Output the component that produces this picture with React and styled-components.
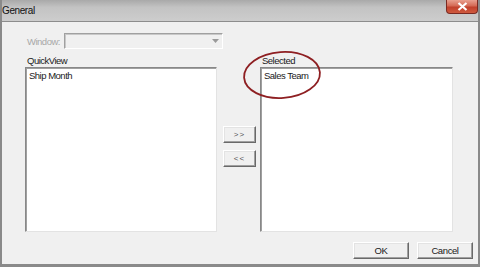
import styled, { createGlobalStyle } from "styled-components";

const GlobalStyle = createGlobalStyle`
  html, body {
    margin: 0;
    padding: 0;
    background: #ffffff;
  }
  body {
    font-family: "Liberation Sans", Arial, sans-serif;
    font-size: 9.5px;
    letter-spacing: -0.5px;
  }
`;

const Frame = styled.div`
  position: relative;
  width: 480px;
  height: 267px;
  box-sizing: border-box;
  display: flex;
  flex-direction: column;
  background: #f0f0f0;
  border-left: 2px solid #8a8a8a;
  border-right: 2px solid #8a8a8a;
  border-bottom: 3px solid #8a8a8a;
  overflow: hidden;
`;

const TitleBar = styled.div`
  height: 21px;
  flex: none;
  display: flex;
  align-items: flex-start;
  justify-content: space-between;
  margin: 0 -2px;
  background: linear-gradient(180deg, #a9a9a9 0%, #c3c3c3 35%, #cdcdcd 100%);
  border-bottom: 1px solid #8d8d8d;
`;

const Title = styled.span`
  padding: 5px 0 0 2px;
  font-size: 10px;
  letter-spacing: -0.4px;
  color: #111;
`;

const CloseButton = styled.div`
  width: 32px;
  height: 14px;
  margin-right: 2px;
  display: flex;
  align-items: center;
  justify-content: center;
  border: 1px solid #7a2a22;
  border-top: none;
  border-radius: 0 0 4px 4px;
  background: linear-gradient(180deg, #e8a08f 0%, #d46a55 45%, #c1412c 55%, #cf5a3f 100%);
  box-sizing: border-box;
`;

const Body = styled.div`
  flex: 1;
  display: flex;
  flex-direction: column;
  padding: 11px 0 0 23px;
`;

const WindowRow = styled.div`
  display: flex;
  align-items: center;
  height: 16px;
`;

const DimLabel = styled.span`
  width: 39px;
  box-sizing: border-box;
  padding-left: 2px;
  color: #a8a8a8;
`;

const Combo = styled.div`
  width: 159px;
  height: 16px;
  box-sizing: border-box;
  display: flex;
  justify-content: flex-end;
  align-items: center;
  border: 1px solid;
  border-color: #a0a0a0 #ffffff #ffffff #a0a0a0;
  box-shadow: inset 1px 1px 0 #c8c8c8;
  background: #f0f0f0;
  padding-right: 3px;
`;

const Lists = styled.div`
  display: grid;
  grid-template-columns: 192px 43px 193px;
  grid-template-rows: 12px 165px;
  margin-top: 6px;
`;

const Label = styled.span`
  color: #1a1a1a;
  padding-left: 2px;
  line-height: 12px;
`;

const ListBox = styled.div`
  box-sizing: border-box;
  background: #ffffff;
  border: 1px solid;
  border-color: #888888 #e3e3e3 #e3e3e3 #888888;
  box-shadow: inset 1px 1px 0 #a0a0a0;
  padding: 2px 3px;
`;

const Item = styled.div`
  color: #1a1a1a;
  line-height: 12px;
`;

const MoveColumn = styled.div`
  display: flex;
  flex-direction: column;
  align-items: flex-start;
  gap: 7px;
  padding: 59px 0 0 6px;
`;

const Button = styled.button`
  width: ${({ wide }) => (wide ? "56px" : "33px")};
  height: 17px;
  padding: 0;
  box-sizing: border-box;
  background: #f0f0f0;
  border: 1px solid;
  border-color: #ffffff #696969 #696969 #ffffff;
  box-shadow: inset -1px -1px 0 #a0a0a0, inset 1px 1px 0 #e3e3e3;
  font-family: "Liberation Sans", Arial, sans-serif;
  font-size: ${({ wide }) => (wide ? "9.5px" : "8px")};
  color: ${({ wide }) => (wide ? "#1a1a1a" : "#555")};
  letter-spacing: ${({ wide }) => (wide ? "-0.4px" : "1px")};
`;

const Footer = styled.div`
  display: flex;
  justify-content: flex-end;
  gap: 8px;
  padding: 10px 5px 0 0;
`;

const Circle = styled.svg`
  position: absolute;
  left: 238px;
  top: 49px;
`;

export default function App() {
  return (
    <>
      <GlobalStyle />
      <Frame>
        <TitleBar>
          <Title>General</Title>
          <CloseButton>
            <svg width="11" height="9" viewBox="0 0 11 9">
              <path d="M1.5 1 L9.5 8 M9.5 1 L1.5 8" stroke="#ffffff" strokeWidth="2.2" />
            </svg>
          </CloseButton>
        </TitleBar>
        <Body>
          <WindowRow>
            <DimLabel>Window:</DimLabel>
            <Combo>
              <svg width="7" height="4" viewBox="0 0 7 4">
                <path d="M0 0 H7 L3.5 4 Z" fill="#9a9a9a" />
              </svg>
            </Combo>
          </WindowRow>
          <Lists>
            <Label>QuickView</Label>
            <span />
            <Label>Selected</Label>
            <ListBox>
              <Item>Ship Month</Item>
            </ListBox>
            <MoveColumn>
              <Button>&gt;&gt;</Button>
              <Button>&lt;&lt;</Button>
            </MoveColumn>
            <ListBox>
              <Item>Sales Team</Item>
            </ListBox>
          </Lists>
          <Footer>
            <Button wide>OK</Button>
            <Button wide>Cancel</Button>
          </Footer>
        </Body>
        <Circle width="84" height="54" viewBox="0 0 84 54">
          <ellipse cx="42" cy="26" rx="38" ry="23" fill="none" stroke="#8e1f22" strokeWidth="1.8" transform="rotate(-4 42 26)" />
        </Circle>
      </Frame>
    </>
  );
}
